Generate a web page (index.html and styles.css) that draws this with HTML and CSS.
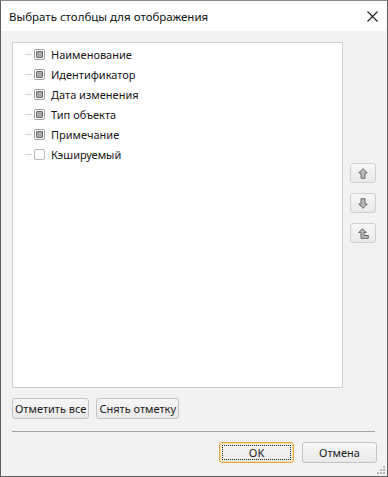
FILE: index.html
```html
<!DOCTYPE html>
<html lang="ru">
<head>
<meta charset="utf-8">
<title>Выбрать столбцы для отображения</title>
<link rel="stylesheet" href="styles.css">
</head>
<body>
<div class="window">
  <div class="titlebar">
    <span class="title">Выбрать столбцы для отображения</span>
    <svg class="close" width="11" height="11" viewBox="0 0 11 11"><path d="M0.5 0.5 L10.5 10.5 M10.5 0.5 L0.5 10.5" stroke="#1e1e1e" stroke-width="1.1" fill="none"/></svg>
  </div>
  <div class="body">
    <div class="main">
      <div class="listbox">
        <div class="item"><span class="dash"></span><span class="cb checked"><span class="mark"></span></span><span class="label">Наименование</span></div>
        <div class="item"><span class="dash"></span><span class="cb checked"><span class="mark"></span></span><span class="label">Идентификатор</span></div>
        <div class="item"><span class="dash"></span><span class="cb checked"><span class="mark"></span></span><span class="label">Дата изменения</span></div>
        <div class="item"><span class="dash"></span><span class="cb checked"><span class="mark"></span></span><span class="label">Тип объекта</span></div>
        <div class="item"><span class="dash"></span><span class="cb checked"><span class="mark"></span></span><span class="label">Примечание</span></div>
        <div class="item"><span class="dash"></span><span class="cb"></span><span class="label">Кэшируемый</span></div>
      </div>
      <div class="side">
        <button class="btn icon-btn" type="button" aria-label="Вверх">
          <svg width="10" height="11" viewBox="0 0 10 11"><path d="M5 0.7 L9.3 5 L7 5 L7 10.3 L3 10.3 L3 5 L0.7 5 Z" fill="#b9b9b9" stroke="#6b6b6b" stroke-width="1" stroke-linejoin="miter"/></svg>
        </button>
        <button class="btn icon-btn" type="button" aria-label="Вниз">
          <svg width="10" height="11" viewBox="0 0 10 11"><path d="M5 10.3 L9.3 6 L7 6 L7 0.7 L3 0.7 L3 6 L0.7 6 Z" fill="#b9b9b9" stroke="#6b6b6b" stroke-width="1"/></svg>
        </button>
        <button class="btn icon-btn" type="button" aria-label="В начало">
          <svg width="11" height="11" viewBox="0 0 11 11"><path d="M4.5 0.7 L8.3 4.5 L6 4.5 L6 7.5 L10.3 7.5 L10.3 10.3 L3 10.3 L3 4.5 L0.7 4.5 Z" fill="#b9b9b9" stroke="#6b6b6b" stroke-width="1"/></svg>
        </button>
      </div>
    </div>
    <div class="actions">
      <button class="btn" type="button">Отметить все</button>
      <button class="btn" type="button">Снять отметку</button>
    </div>
    <div class="sep"></div>
    <div class="footer">
      <button class="btn dlg focused" type="button">OK</button>
      <button class="btn dlg" type="button">Отмена</button>
    </div>
  </div>
  <div class="grip">
    <i style="right:2px;bottom:2px"></i><i style="right:5px;bottom:2px"></i><i style="right:8px;bottom:2px"></i>
    <i style="right:2px;bottom:5px"></i><i style="right:5px;bottom:5px"></i>
    <i style="right:2px;bottom:8px"></i>
  </div>
</div>
</body>
</html>
```
FILE: styles.css
```css
* { box-sizing: border-box; }
html, body { margin: 0; padding: 0; }
body {
  font-family: "Noto Sans", "Liberation Sans", Arial, sans-serif;
  font-size: 11px;
  color: #1b1b1b;
  background: #ffffff;
}
.window {
  position: relative;
  width: 388px;
  height: 477px;
  border: 1px solid #5f5f5f;
  border-top-color: #8a8a8a;
  background: #f2f2f2;
  display: flex;
  flex-direction: column;
}
.titlebar {
  height: 30px;
  background: #ffffff;
  display: flex;
  align-items: center;
  justify-content: space-between;
  padding: 0 9px 0 8px;
  flex: none;
}
.title {
  font-family: "Noto Sans", "Liberation Sans", sans-serif;
  font-size: 11.5px;
  color: #111;
}
.close { display: block; margin-top: 1px; }
.body {
  flex: 1;
  display: flex;
  flex-direction: column;
  padding: 11px 11px 0 11px;
}
.main {
  display: flex;
  height: 346px;
}
.listbox {
  flex: 1;
  background: #ffffff;
  border: 1px solid #cfcfcf;
  padding-top: 1px;
}
.item {
  height: 20px;
  display: flex;
  align-items: center;
  padding-left: 12px;
}
.dash {
  width: 7px;
  height: 1px;
  background: #d6d6d6;
  margin-right: 2px;
}
.cb {
  width: 11px;
  height: 11px;
  border: 1px solid #b8b8b8;
  border-radius: 2px;
  background: #ffffff;
  display: flex;
  align-items: center;
  justify-content: center;
}
.cb.checked { border-color: #a0a0a0; }
.mark {
  width: 7px;
  height: 7px;
  border: 1px solid #6a6a6a;
  border-radius: 1px;
  background: #a9a9a9;
}
.label {
  margin-left: 6px;
  font-size: 11px;
  color: #161616;
}
.side {
  width: 33px;
  padding-left: 7px;
  padding-top: 121px;
  display: flex;
  flex-direction: column;
  gap: 10px;
}
.btn {
  font-family: "Noto Sans", "Liberation Sans", sans-serif;
  font-size: 11px;
  color: #1b1b1b;
  height: 21px;
  padding: 0 2px;
  border: 1px solid #c3c3c3;
  border-radius: 3px;
  background: linear-gradient(#f7f7f7, #e9e9e9);
  display: flex;
  align-items: center;
  justify-content: center;
  line-height: 1;
}
.icon-btn {
  width: 26px;
  height: 20px;
  padding: 0;
  border-color: #d0d0d0;
}
.icon-btn svg { display: block; }
.actions {
  display: flex;
  gap: 7px;
  margin-top: 10px;
}
.sep {
  height: 1px;
  background: #a3a3a3;
  margin-top: 12px;
  margin-right: 1px;
}
.footer {
  display: flex;
  justify-content: flex-end;
  gap: 8px;
  margin-top: 10px;
  margin-right: -1px;
}
.dlg {
  width: 75px;
}
.focused {
  border: 1px solid #e8a640;
  box-shadow: inset 0 0 0 1px #ffe2a8;
  position: relative;
}
.focused::after {
  content: "";
  position: absolute;
  left: 2px; top: 2px; right: 2px; bottom: 2px;
  border: 1px dotted #222;
}
.grip {
  position: absolute;
  right: 0;
  bottom: 0;
  width: 11px;
  height: 11px;
}
.grip i {
  position: absolute;
  width: 2px;
  height: 2px;
  background: #b5b5b5;
}
```
